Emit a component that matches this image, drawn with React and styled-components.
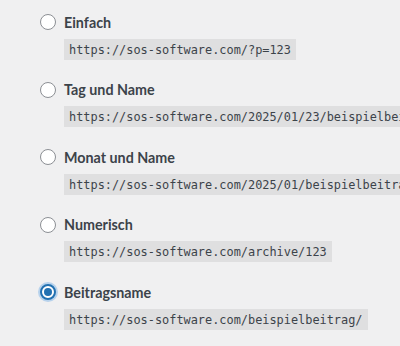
import React from 'react';
import styled, { createGlobalStyle } from 'styled-components';

const GlobalStyle = createGlobalStyle`
	html, body {
		margin: 0;
		padding: 0;
		background: #f0f0f1;
		overflow: hidden;
	}
`;

const List = styled.div`
	padding: 12px 0 0 40px;
	font-family: Lato, "Noto Sans", sans-serif;
`;

const Option = styled.div`
	margin-bottom: 20px;
`;

const LabelRow = styled.label`
	display: flex;
	align-items: center;
	height: 20px;
	gap: 8px;
	font-size: 14.3px;
	font-weight: 700;
	color: #3c434a;
	cursor: pointer;
`;

const Radio = styled.span`
	box-sizing: border-box;
	width: 16px;
	height: 16px;
	border-radius: 50%;
	background: #fff;
	border: ${props => (props.checked ? '2px solid #2271b1' : '1px solid #8c8f94')};
	box-shadow: ${props => (props.checked ? '0 0 0 2px rgba(114, 174, 230, 0.45)' : 'none')};
	display: flex;
	align-items: center;
	justify-content: center;
	flex-shrink: 0;
`;

const Dot = styled.span`
	width: 8px;
	height: 8px;
	border-radius: 50%;
	background: #2271b1;
`;

const Url = styled.code`
	display: inline-block;
	margin: 6.5px 0 0 24px;
	padding: 3px 5px 2px;
	line-height: 16px;
	font-family: "DejaVu Sans Mono", "Liberation Mono", monospace;
	font-size: 11.9px;
	color: #3c434a;
	background: rgba(0, 0, 0, 0.07);
	white-space: nowrap;
`;

const options = [
	{ label: 'Einfach', url: 'https://sos-software.com/?p=123' },
	{ label: 'Tag und Name', url: 'https://sos-software.com/2025/01/23/beispielbeitrag/' },
	{ label: 'Monat und Name', url: 'https://sos-software.com/2025/01/beispielbeitrag/' },
	{ label: 'Numerisch', url: 'https://sos-software.com/archive/123' },
	{ label: 'Beitragsname', url: 'https://sos-software.com/beispielbeitrag/', checked: true },
];

const App = () => (
	<>
		<GlobalStyle />
		<List>
			{options.map(opt => (
				<Option key={opt.label}>
					<LabelRow>
						<Radio checked={opt.checked}>{opt.checked ? <Dot /> : null}</Radio>
						{opt.label}
					</LabelRow>
					<Url>{opt.url}</Url>
				</Option>
			))}
		</List>
	</>
);

export default App;
